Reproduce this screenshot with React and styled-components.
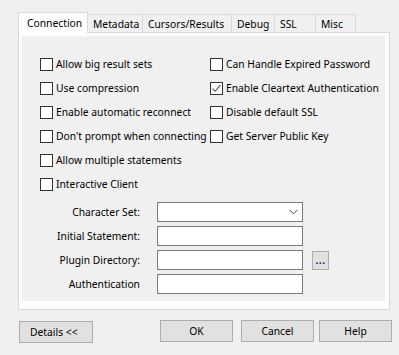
import React from 'react';
import styled, { createGlobalStyle } from 'styled-components';

const GlobalStyle = createGlobalStyle`
body {
  margin: 0;
  background-color: #f0f0f0;
  font-family: "Noto Sans", "Open Sans", sans-serif;
  font-size: 10.3px;
  color: #000;
}
`;

const Dialog = styled.div`
width: 399px;
height: 355px;
box-sizing: border-box;
padding: 12px 0 0 18px;
background-color: #f0f0f0;
`;

const TabStrip = styled.div`
display: flex;
align-items: flex-start;
height: 21px;
margin-bottom: -1px;
position: relative;
z-index: 1;
`;

const Tab = styled.div`
box-sizing: border-box;
width: ${p => p.$w}px;
height: ${p => (p.$active ? 21 : 18)}px;
margin-top: ${p => (p.$active ? 0 : 2)}px;
padding-left: ${p => (p.$active ? 8 : 5)}px;
display: flex;
align-items: center;
background-color: ${p => (p.$active ? '#fff' : '#f0f0f0')};
border: 1px solid #d9d9d9;
border-left: ${p => (p.$active ? '1px solid #d9d9d9' : 'none')};
border-bottom: none;
white-space: nowrap;
`;

const TabPage = styled.div`
box-sizing: border-box;
width: 372px;
height: 278px;
border: 1px solid #d9d9d9;
background-color: #fff;
padding: 3px 4px 8px 3px;
`;

const Panel = styled.div`
height: 100%;
background-color: #f0f0f0;
padding: 16px 0 0 18px;
box-sizing: border-box;
`;

const Options = styled.div`
display: flex;
`;

const Column = styled.div`
display: flex;
flex-direction: column;
width: ${p => p.$w}px;
`;

const CheckRow = styled.label`
display: flex;
align-items: center;
height: 24px;
gap: 3px;
white-space: nowrap;
`;

const Box = styled.span`
box-sizing: border-box;
width: 13px;
height: 13px;
border: 1px solid #333;
background-color: #fff;
display: flex;
align-items: center;
justify-content: center;
flex-shrink: 0;
`;

const Form = styled.div`
display: grid;
grid-template-columns: 118px 146px 17px;
column-gap: 17px;
row-gap: 4px;
margin-top: 6px;
margin-left: -18px;
align-items: center;
`;

const FieldLabel = styled.div`
text-align: right;
white-space: nowrap;
`;

const Field = styled.div`
box-sizing: border-box;
height: 20px;
border: 1px solid #7a7a7a;
background-color: #fff;
display: flex;
align-items: center;
justify-content: flex-end;
padding-right: 4px;
`;

const SmallButton = styled.div`
box-sizing: border-box;
width: 17px;
height: 19px;
margin-left: -8px;
border: 1px solid #adadad;
background-color: #e1e1e1;
color: #1a1a8a;
display: flex;
align-items: flex-end;
justify-content: center;
padding-bottom: 3px;
line-height: 1;
font-weight: bold;
letter-spacing: 0.5px;
`;

const ButtonBar = styled.div`
display: flex;
align-items: flex-start;
margin-top: 10px;
`;

const Button = styled.div`
box-sizing: border-box;
width: ${p => p.$w || 73}px;
height: 22px;
margin-top: ${p => p.$top || 0}px;
margin-left: ${p => p.$gap || 0}px;
border: 1px solid #adadad;
background-color: #e1e1e1;
display: flex;
align-items: center;
justify-content: center;
`;

const DetailsButton = styled(Button)`
justify-content: flex-start;
padding-left: 10px;
`;

const tabs = [
  { name: 'Connection', w: 70, active: true },
  { name: 'Metadata', w: 55 },
  { name: 'Cursors/Results', w: 89 },
  { name: 'Debug', w: 43 },
  { name: 'SSL', w: 41 },
  { name: 'Misc', w: 40 },
];

const leftOptions = [
  'Allow big result sets',
  'Use compression',
  'Enable automatic reconnect',
  "Don't prompt when connecting",
  'Allow multiple statements',
  'Interactive Client',
];

const rightOptions = [
  { label: 'Can Handle Expired Password' },
  { label: 'Enable Cleartext Authentication', checked: true },
  { label: 'Disable default SSL' },
  { label: 'Get Server Public Key' },
];

const Check = ({ label, checked }) => (
  <CheckRow>
    <Box>
      {checked && (
        <svg width="11" height="11" viewBox="0 0 11 11">
          <path d="M1.5 5.5 L4.2 8.2 L9.5 2" fill="none" stroke="#6a6a6a" strokeWidth="1.2" />
        </svg>
      )}
    </Box>
    {label}
  </CheckRow>
);

const Chevron = () => (
  <svg width="9" height="6" viewBox="0 0 9 6">
    <path d="M0.5 0.8 L4.5 4.8 L8.5 0.8" fill="none" stroke="#444" strokeWidth="1" />
  </svg>
);

const App = () => {
  return (
    <>
      <GlobalStyle />
      <Dialog>
        <TabStrip>
          {tabs.map(t => (
            <Tab key={t.name} $w={t.w} $active={t.active}>{t.name}</Tab>
          ))}
        </TabStrip>
        <TabPage>
          <Panel>
            <Options>
              <Column $w={170}>
                {leftOptions.map(o => <Check key={o} label={o} />)}
              </Column>
              <Column $w={170}>
                {rightOptions.map(o => <Check key={o.label} label={o.label} checked={o.checked} />)}
              </Column>
            </Options>
            <Form>
              <FieldLabel>Character Set:</FieldLabel>
              <Field><Chevron /></Field>
              <span />
              <FieldLabel>Initial Statement:</FieldLabel>
              <Field />
              <span />
              <FieldLabel>Plugin Directory:</FieldLabel>
              <Field />
              <SmallButton>...</SmallButton>
              <FieldLabel>Authentication</FieldLabel>
              <Field />
              <span />
            </Form>
          </Panel>
        </TabPage>
        <ButtonBar>
          <DetailsButton $w={74} $top={1} $gap={1}>Details &lt;&lt;</DetailsButton>
          <Button $gap={67}>OK</Button>
          <Button $gap={8}>Cancel</Button>
          <Button $gap={5}>Help</Button>
        </ButtonBar>
      </Dialog>
    </>
  );
};

export default App;
